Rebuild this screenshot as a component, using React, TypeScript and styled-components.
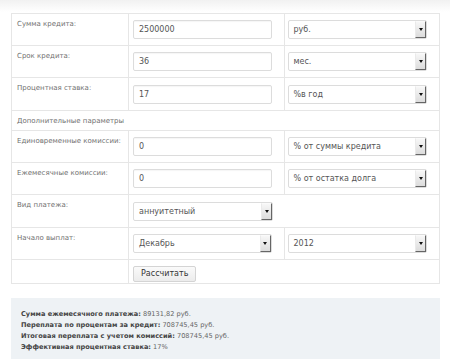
import styled, { createGlobalStyle } from "styled-components";

const GlobalStyle = createGlobalStyle`
    body {
        margin: 0;
        background: linear-gradient(#f1f1f1 0px, #ffffff 12px);
        font-family: "DejaVu Sans", Verdana, sans-serif;
    }
`;

const Page = styled.div`
    width: 450px;
    height: 359px;
    padding: 13px 10px 0 11px;
    box-sizing: border-box;
    overflow: hidden;
`;

const CalcTable = styled.table`
    width: 429px;
    border-collapse: collapse;
    table-layout: fixed;
    background: #fff;
    border: 1px solid #e6e6e6;
`;

const Row = styled.tr<{ h: number }>`
    height: ${p => p.h}px;
`;

const LabelCell = styled.td`
    width: 106px;
    padding: 6px 5px 0 5px;
    vertical-align: top;
    border: 1px solid #e6e6e6;
    font-size: 7px;
    color: #707070;
`;

const SectionCell = styled.td`
    padding: 0 5px;
    vertical-align: middle;
    border: 1px solid #e6e6e6;
    font-size: 7px;
    color: #707070;
`;

const FieldCell = styled.td<{ left?: number }>`
    padding: 0 12px 0 ${p => p.left ?? 4}px;
    vertical-align: middle;
    border: 1px solid #e6e6e6;
`;

const TextBox = styled.div`
    height: 19px;
    box-sizing: border-box;
    border: 1px solid #dcdcdc;
    border-radius: 2px;
    box-shadow: inset 0 1px 1px rgba(0, 0, 0, 0.04);
    padding: 0 5px;
    display: flex;
    align-items: center;
    font-size: 8px;
    color: #555;
    background: #fff;
`;

const SelectBox = styled.div<{ w?: number }>`
    height: 19px;
    width: ${p => (p.w ? `${p.w}px` : "auto")};
    box-sizing: border-box;
    border: 1px solid #dcdcdc;
    border-radius: 2px;
    padding: 0 0 0 5px;
    display: flex;
    align-items: center;
    justify-content: space-between;
    font-size: 8px;
    color: #555;
    background: #fff;
`;

const Arrow = styled.span`
    width: 11px;
    height: 17px;
    box-sizing: border-box;
    display: flex;
    align-items: center;
    justify-content: center;
    background: linear-gradient(#f7f7f7, #dcdcdc);
    border-left: 1px solid #eaeaea;
    border-top: 1px solid #fafafa;
    border-right: 1px solid #666;
    border-bottom: 1px solid #666;

    &::after {
        content: "";
        border-left: 2px solid transparent;
        border-right: 2px solid transparent;
        border-top: 3px solid #111;
    }
`;

const Button = styled.button`
    height: 16px;
    padding: 0 7px;
    font-family: "DejaVu Sans", Verdana, sans-serif;
    font-size: 8px;
    color: #333;
    background: linear-gradient(#fafafa, #ececec);
    border: 1px solid #d4d4d4;
    border-radius: 2px;
`;

const Results = styled.div`
    margin-top: 14px;
    width: 429px;
    height: 70px;
    box-sizing: border-box;
    background: #eef2f5;
    padding: 11px 10px;
    font-size: 6.6px;
    line-height: 11px;
    color: #666;
`;

const ResultLine = styled.div`
    b {
        color: #444;
    }
`;

function Select({ value, w }: { value: string; w?: number }) {
    return (
        <SelectBox w={w}>
            <span>{value}</span>
            <Arrow />
        </SelectBox>
    );
}

export default function App() {
    return (
        <Page>
            <GlobalStyle />
            <CalcTable>
                <tbody>
                    <Row h={32}>
                        <LabelCell>Сумма кредита:</LabelCell>
                        <FieldCell><TextBox>2500000</TextBox></FieldCell>
                        <FieldCell left={3}><Select value="руб." /></FieldCell>
                    </Row>
                    <Row h={32}>
                        <LabelCell>Срок кредита:</LabelCell>
                        <FieldCell><TextBox>36</TextBox></FieldCell>
                        <FieldCell left={3}><Select value="мес." /></FieldCell>
                    </Row>
                    <Row h={33}>
                        <LabelCell>Процентная ставка:</LabelCell>
                        <FieldCell><TextBox>17</TextBox></FieldCell>
                        <FieldCell left={3}><Select value="%в год" /></FieldCell>
                    </Row>
                    <Row h={20}>
                        <SectionCell colSpan={3}>Дополнительные параметры</SectionCell>
                    </Row>
                    <Row h={32}>
                        <LabelCell>Единовременные комиссии:</LabelCell>
                        <FieldCell><TextBox>0</TextBox></FieldCell>
                        <FieldCell left={3}><Select value="% от суммы кредита" /></FieldCell>
                    </Row>
                    <Row h={32}>
                        <LabelCell>Ежемесячные комиссии:</LabelCell>
                        <FieldCell><TextBox>0</TextBox></FieldCell>
                        <FieldCell left={3}><Select value="% от остатка долга" /></FieldCell>
                    </Row>
                    <Row h={33}>
                        <LabelCell>Вид платежа:</LabelCell>
                        <FieldCell colSpan={2}><Select value="аннуитетный" w={140} /></FieldCell>
                    </Row>
                    <Row h={32}>
                        <LabelCell>Начало выплат:</LabelCell>
                        <FieldCell><Select value="Декабрь" /></FieldCell>
                        <FieldCell left={3}><Select value="2012" /></FieldCell>
                    </Row>
                    <Row h={24}>
                        <LabelCell />
                        <FieldCell colSpan={2}><Button>Рассчитать</Button></FieldCell>
                    </Row>
                </tbody>
            </CalcTable>
            <Results>
                <ResultLine><b>Сумма ежемесячного платежа:</b> 89131,82 руб.</ResultLine>
                <ResultLine><b>Переплата по процентам за кредит:</b> 708745,45 руб.</ResultLine>
                <ResultLine><b>Итоговая переплата с учетом комиссий:</b> 708745,45 руб.</ResultLine>
                <ResultLine><b>Эффективная процентная ставка:</b> 17%</ResultLine>
            </Results>
        </Page>
    );
}
